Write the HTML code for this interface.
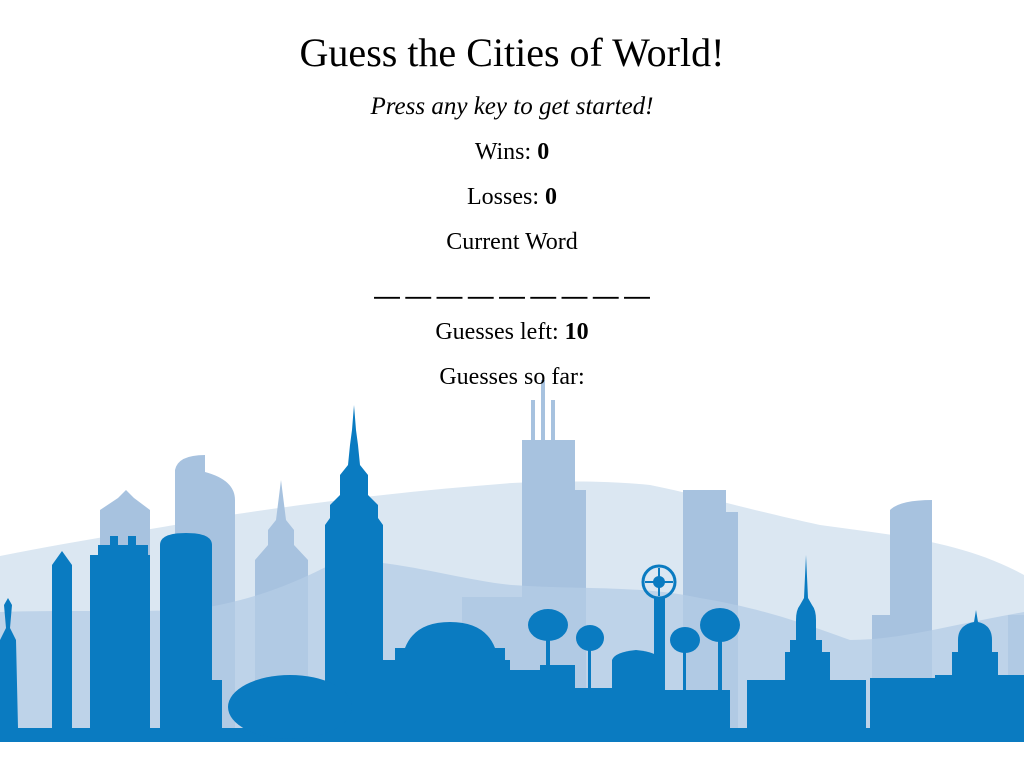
<!DOCTYPE html>
<html><head><meta charset="utf-8"><style>
html,body{margin:0;padding:0;background:#fff;width:1024px;height:768px;overflow:hidden;font-family:"Liberation Serif",serif;color:#000}
.t{position:absolute;left:0;width:1024px;text-align:center;white-space:nowrap;line-height:1}
svg{position:absolute;left:0;top:0}
</style></head><body>
<svg width="1024" height="768" viewBox="0 0 1024 768">
<path fill="#dbe7f2" d="M0 556 C80 540 150 530 230 515 C330 500 420 490 512 483 C580 480 620 482 650 485 C700 495 750 510 820 525 C890 535 960 540 1024 575 L1024 742 L0 742Z"/>
<g fill="#a7c2df">
<path d="M175 742 V470 Q178 455 205 455 V472 Q235 480 235 500 V742Z"/>
<path d="M100 742 V510 L118 498 L126 490 L134 498 L150 510 V742Z"/>
<path d="M255 742 V560 L268 545 V530 L276 520 L281 480 L286 520 L294 530 V545 L308 560 V742Z"/>
<path d="M522 742 V440 H531 V400 H535 V440 H541 V380 H545 V440 H551 V400 H555 V440 H575 V490 H586 V742Z"/>
<path d="M683 742 V490 H726 V512 H738 V742Z"/>
<path d="M872 742 V615 H890 V510 Q900 500 932 500 V742Z"/>
<path d="M462 742 V597 H540 V742Z"/>
<path d="M1008 742 V615 H1024 V742Z"/>
</g>
<path fill="#b4cce5" opacity="0.75" d="M0 612 C60 610 120 612 190 610 C260 600 300 580 340 560 C400 560 460 580 512 585 C580 590 640 585 700 598 C760 608 800 622 850 640 C900 640 950 625 1024 612 L1024 742 L0 742Z"/>
<g fill="#0a7bc1">
<rect x="0" y="728" width="1024" height="14"/>
<path d="M0 742 V640 L6 628 L4 605 L8 598 L12 605 L10 628 L16 640 L18 728 H0Z"/>
<path d="M52 728 V565 L62 551 L72 565 V728Z"/>
<path d="M90 728 V555 H98 V545 H110 V536 H118 V545 H128 V536 H136 V545 H148 V555 H150 V728Z"/>
<path d="M160 728 V545 Q160 533 186 533 Q212 533 212 545 V728Z"/>
<path d="M212 728 V680 H222 V728Z"/>
<path d="M325 728 V525 L330 518 V505 L340 495 V475 L348 465 L350 445 L352 430 L354 405 L356 430 L358 445 L360 465 L368 475 V495 L378 505 V518 L383 525 V728Z"/>
<ellipse cx="290" cy="707" rx="62" ry="32"/>
<path d="M372 728 V660 H395 V648 H405 Q415 622 450 622 Q485 622 495 648 H505 V660 H510 V728Z"/>
<path d="M510 728 V670 H540 V728Z"/>
<path d="M540 728 V665 H575 V728Z"/>
<path d="M575 728 V688 H612 V728Z"/>
<path d="M612 728 V660 Q615 652 636 650 Q658 652 660 660 V728Z"/>
<rect x="654" y="598" width="11" height="130"/>
<circle cx="659" cy="582" r="16" fill="none" stroke="#0a7bc1" stroke-width="3"/>
<path d="M645 582 H673 M659 568 V596" stroke="#0a7bc1" stroke-width="2"/>
<circle cx="659" cy="582" r="6"/>
<path d="M665 728 V690 H730 V728Z"/>
<rect x="546" y="635" width="4" height="60"/>
<ellipse cx="548" cy="625" rx="20" ry="16"/>
<rect x="588" y="640" width="3" height="50"/>
<ellipse cx="590" cy="638" rx="14" ry="13"/>
<rect x="683" y="645" width="3" height="50"/>
<ellipse cx="685" cy="640" rx="15" ry="13"/>
<rect x="718" y="630" width="4" height="70"/>
<ellipse cx="720" cy="625" rx="20" ry="17"/>
<path d="M747 728 V680 H785 V652 H790 V640 H796 V620 Q796 610 800 605 L804 598 L806 555 L808 598 L812 605 Q816 610 816 620 V640 H822 V652 H830 V680 H866 V728Z"/>
<path d="M870 728 V678 H935 V728Z"/>
<path d="M935 728 V675 H952 V652 H958 V640 Q958 625 974 622 L976 610 L978 622 Q992 625 992 640 V652 H998 V675 H1024 V728Z"/>
</g>
</svg>
<div class="t" style="top:33px;font-size:40px">Guess the Cities of World!</div>
<div class="t" style="top:94px;font-size:25px;font-style:italic">Press any key to get started!</div>
<div class="t" style="top:140px;font-size:24px">Wins: <b>0</b></div>
<div class="t" style="top:185px;font-size:24px">Losses: <b>0</b></div>
<div class="t" style="top:230px;font-size:24px">Current Word</div>
<div class="t" style="top:284px;font-size:25px;-webkit-text-stroke:0.6px #000">— — — — — — — — —</div>
<div class="t" style="top:320px;font-size:24px">Guesses left: <b>10</b></div>
<div class="t" style="top:365px;font-size:24px">Guesses so far:</div>
</body></html>
